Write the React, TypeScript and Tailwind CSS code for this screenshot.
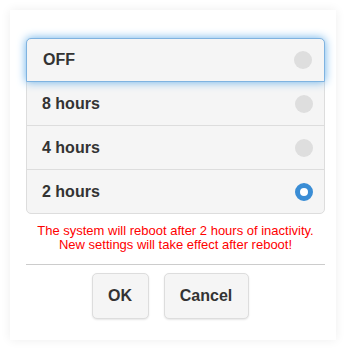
import React, { useState } from 'react'

const options = ['OFF', '8 hours', '4 hours', '2 hours']

function Radio({ checked }: { checked: boolean }) {
  if (checked) {
    return <span className="block h-[18px] w-[18px] rounded-full border-[5px] border-[#3a8dd5] bg-white" />
  }
  return <span className="block h-[18px] w-[18px] rounded-full bg-[#dedede]" />
}

export default function App() {
  const [selected] = useState(3)
  const focused = 0

  return (
    <div className="min-h-[350px] w-[346px] bg-white p-[10px] font-['Liberation_Sans',Arial,sans-serif]">
      <div className="flex h-[330px] w-[326px] flex-col bg-white pt-[28px] pr-[11px] pl-[16px] shadow-[0_0_10px_rgba(0,0,0,0.07)]">
        <div className="flex flex-col rounded-[5px] border border-[#dddddd] bg-[#f5f5f5]">
          {options.map((opt, i) => (
            <div
              key={opt}
              className={
                i === focused
                  ? 'relative z-10 -m-px flex h-[44px] items-center justify-between rounded-t-[5px] border border-[#7fb3e0] bg-[#f5f5f5] pr-[12px] pl-[16px] shadow-[0_0_10px_rgba(102,175,233,1)]'
                  : 'flex h-[44px] items-center justify-between border-t border-[#dddddd] pr-[11px] pl-[15px]'
              }
            >
              <span className="text-[16px] font-bold text-[#333333]">{opt}</span>
              <Radio checked={i === selected} />
            </div>
          ))}
        </div>

        <p className="mt-[10px] text-center text-[13px] leading-[14px] text-[#ff0000]">
          The system will reboot after 2 hours of inactivity.
          <br />
          New settings will take effect after reboot!
        </p>

        <hr className="mt-[12px] border-t border-[#cccccc]" />

        <div className="mt-[8px] flex justify-center gap-[15px] pr-[11px]">
          <button className="h-[46px] w-[57px] rounded-[5px] border border-[#dddddd] bg-[#f5f5f5] text-[16px] font-bold text-[#333333] shadow-[0_1px_2px_rgba(0,0,0,0.1)]">
            OK
          </button>
          <button className="h-[46px] w-[85px] rounded-[5px] border border-[#dddddd] bg-[#f5f5f5] text-[16px] font-bold text-[#333333] shadow-[0_1px_2px_rgba(0,0,0,0.1)]">
            Cancel
          </button>
        </div>
      </div>
    </div>
  )
}
